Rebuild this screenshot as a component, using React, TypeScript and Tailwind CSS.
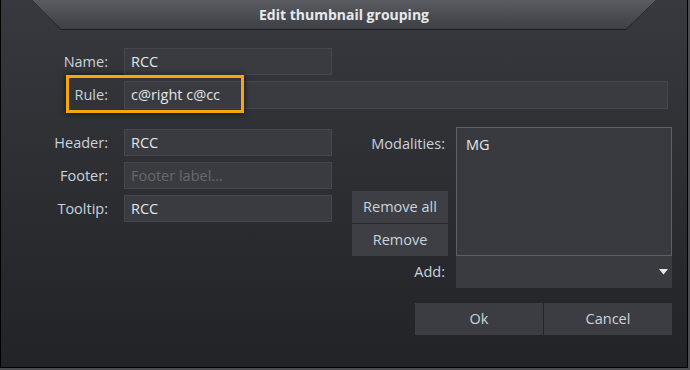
import React from 'react'

const font = { fontFamily: '"Open Sans", "Noto Sans", sans-serif' }

function Field({
  label,
  value,
  placeholder,
  wide = false,
}: {
  label: string
  value?: string
  placeholder?: string
  wide?: boolean
}) {
  return (
    <div className="flex items-center">
      <div className="w-[108px] pr-[1px] text-right text-[14.5px] text-[#cbd3dc]">{label}</div>
      <div
        className={`ml-[15px] flex items-center border border-[#45474c] bg-[#3a3b40] px-[6px] text-[14.5px] ${
          wide ? 'h-[28px] w-[544px]' : 'h-[27px] w-[208px]'
        }`}
      >
        {value ? (
          <span className="text-[#e4e6ea]">{value}</span>
        ) : (
          <span className="text-[#66686d]">{placeholder}</span>
        )}
      </div>
    </div>
  )
}

export default function App() {
  return (
    <div className="h-[370px] w-[690px] bg-[#4b4c50]" style={font}>
      <div className="relative flex h-[368px] w-[688px] flex-col border-x border-b border-black bg-gradient-to-b from-[#37393e] to-[#222327]">
        {/* Title tab */}
        <div className="mx-[31px] h-[30px] bg-[#1d1e21] [clip-path:polygon(0_0,100%_0,calc(100%-30px)_100%,29px_100%)]">
          <div className="flex h-[29px] items-center justify-center bg-gradient-to-b from-[#5a5c61] to-[#3d3f44] [clip-path:polygon(0_0,100%_0,calc(100%-30px)_100%,29px_100%)]">
            <span className="text-[14px] font-bold text-[#e6e8ec]">Edit thumbnail grouping</span>
          </div>
        </div>

        <div className="mt-[18px] flex flex-col gap-[6px]">
          <Field label="Name:" value="RCC" />
          <Field label="Rule:" value="c@right c@cc" wide />
        </div>

        {/* highlight around the rule row */}
        <div className="pointer-events-none absolute left-[65px] top-[75px] h-[38px] w-[178px] border-[3px] border-[#f6a70d] shadow-[0_0_6px_rgba(0,0,0,0.7)]" />

        <div className="mt-[18px] flex items-start">
          <div className="mt-[2px] flex flex-col gap-[6px]">
            <Field label="Header:" value="RCC" />
            <Field label="Footer:" placeholder="Footer label..." />
            <Field label="Tooltip:" value="RCC" />
          </div>

          <div className="ml-[20px] grid grid-cols-[96px_216px] gap-x-[8px]">
            <div className="flex h-[129px] flex-col justify-between">
              <div className="pr-[3px] pt-[7px] text-right text-[14.5px] leading-[20px] text-[#cbd3dc]">Modalities:</div>
              <div className="flex flex-col gap-[1px]">
                <button className="h-[32px] bg-[#3d3f44] text-[14.5px] text-[#cbd3dc]">Remove all</button>
                <button className="h-[32px] bg-[#3d3f44] text-[14.5px] text-[#cbd3dc]">Remove</button>
              </div>
            </div>
            <div className="h-[129px] border border-[#5d5f64] bg-[#393a3f] px-[9px] pt-[6px] text-[14.5px] text-[#e4e6ea]">
              MG
            </div>
            <div className="flex h-[32px] items-center justify-end pr-[3px] text-[14.5px] text-[#cbd3dc]">Add:</div>
            <div className="flex h-[32px] items-center justify-end bg-[#3a3b40] pr-[4px]">
              <svg width="9" height="6" viewBox="0 0 9 6">
                <path d="M0 0h9L4.5 5.5z" fill="#e8e8e8" />
              </svg>
            </div>
          </div>
        </div>

        <div className="mt-[15px] flex justify-end gap-[1px] pr-[15px]">
          <button className="h-[32px] w-[128px] bg-[#3b3d42] text-[14.5px] text-[#cbd3dc]">Ok</button>
          <button className="h-[32px] w-[128px] bg-[#3b3d42] text-[14.5px] text-[#cbd3dc]">Cancel</button>
        </div>
      </div>
    </div>
  )
}
